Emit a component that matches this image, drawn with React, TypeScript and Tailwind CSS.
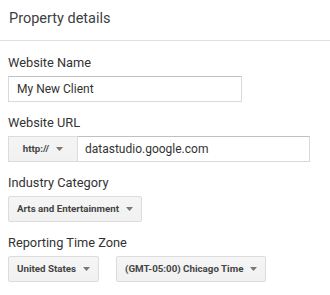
const font = { fontFamily: "Roboto, 'Liberation Sans', sans-serif" };

function Caret() {
  return (
    <svg width="7" height="4" viewBox="0 0 7 4" className="shrink-0">
      <path d="M0 0h7L3.5 4z" fill="#777" />
    </svg>
  );
}

function Dropdown({ label }: { label: string }) {
  return (
    <div className="h-[26px] flex items-center gap-[7px] px-[8px] border border-[#dcdcdc] bg-gradient-to-b from-[#f5f5f5] to-[#f1f1f1] rounded-[2px] text-[9.75px] font-bold text-[#444] whitespace-nowrap">
      <span>{label}</span>
      <Caret />
    </div>
  );
}

function Label({ children }: { children: string }) {
  return <div className="h-[20px] leading-[20px] text-[12.8px] text-[#333] mb-[3px]">{children}</div>;
}

export default function App() {
  return (
    <div className="w-[330px] h-[295px] bg-white overflow-hidden" style={font}>
      <div className="h-[41px] border-b border-[#e0e0e0] pl-[9px] pt-[9px]">
        <h2 className="text-[14.5px] leading-[20px] text-[#3c4043]">Property details</h2>
      </div>

      <div className="pl-[8px] pt-[12px] flex flex-col gap-[11px]">
        <div>
          <Label>Website Name</Label>
          <div className="w-[234px] h-[26px] border border-[#d9d9d9] border-t-[#c0c0c0] flex items-center pl-[8px] text-[12px] text-[#333]">
            My New Client
          </div>
        </div>

        <div>
          <Label>Website URL</Label>
          <div className="w-[302px] h-[26px] flex">
            <div className="w-[70px] h-full flex items-center justify-center gap-[7px] border border-[#dcdcdc] bg-gradient-to-b from-[#f5f5f5] to-[#f1f1f1] text-[9.75px] font-bold text-[#444]">
              <span>http://</span>
              <Caret />
            </div>
            <div className="flex-1 h-full border border-l-0 border-[#d9d9d9] border-t-[#c0c0c0] flex items-center pl-[7px] text-[12px] text-[#333]">
              datastudio.google.com
            </div>
          </div>
        </div>

        <div>
          <Label>Industry Category</Label>
          <div className="flex">
            <Dropdown label="Arts and Entertainment" />
          </div>
        </div>

        <div>
          <Label>Reporting Time Zone</Label>
          <div className="flex gap-[17px]">
            <Dropdown label="United States" />
            <Dropdown label="(GMT-05:00) Chicago Time" />
          </div>
        </div>
      </div>
    </div>
  );
}
